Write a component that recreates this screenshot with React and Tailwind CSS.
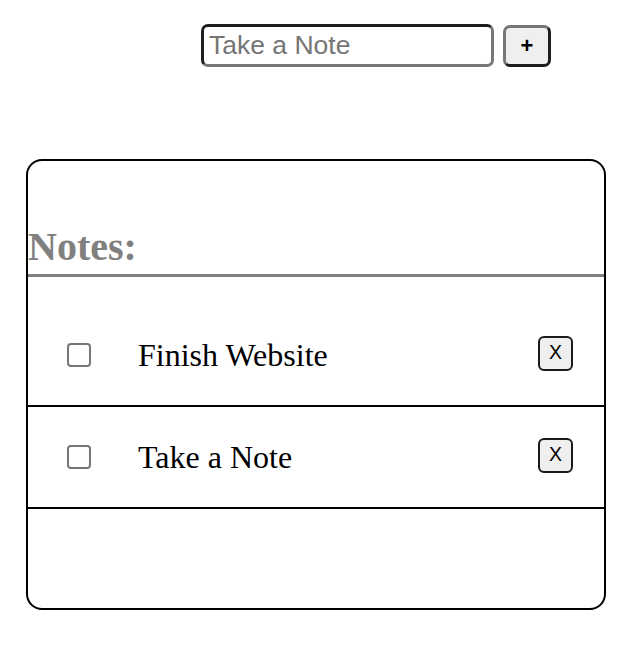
import React, { useState } from 'react';

const NoteRow = ({ text }) => (
    <li className="flex items-center h-[102px] border-b-2 border-black">
        <input
            type="checkbox"
            className="appearance-none ml-[39px] w-6 h-6 border-2 border-[#767676] rounded-[4px] bg-white"
        />
        <span className="ml-[47px] text-[32px] text-black font-['Liberation_Serif',serif]">{text}</span>
        <button
            type="button"
            className="ml-auto mr-[31px] mb-[4px] w-[35px] h-[35px] border-2 border-[#1a1a1a] rounded-[6px] bg-[#efefef] text-[19.5px] leading-none font-['Liberation_Sans',Arial,sans-serif] text-black"
        >
            X
        </button>
    </li>
);

const App = () => {
    const [notes] = useState(['Finish Website', 'Take a Note']); // sample data

    return (
        <div className="w-[642px] h-[662px] bg-white">
            {/* input bar */}
            <div className="flex items-center gap-[9px] pl-[201px] pt-[24px]">
                <input
                    type="text"
                    placeholder="Take a Note"
                    className="w-[293px] h-[43px] px-[5px] border-[3px] border-t-[#1e1e1e] border-l-[#1e1e1e] border-r-[#767676] border-b-[#767676] rounded-[7px] text-[26.5px] font-['Liberation_Sans',Arial,sans-serif] placeholder:text-[#757575] outline-none"
                />
                <button
                    type="button"
                    className="w-[48px] h-[42px] border-[3px] border-t-[#767676] border-l-[#767676] border-r-[#1e1e1e] border-b-[#1e1e1e] rounded-[7px] bg-[#efefef] text-[22px] font-bold leading-none font-['Liberation_Sans',Arial,sans-serif] text-black"
                >
                    +
                </button>
            </div>

            {/* notes card */}
            <div className="mt-[92px] ml-[26px] w-[580px] h-[451px] border-2 border-black rounded-[16px]">
                <h1 className="mt-[66px] pb-[7px] leading-[40px] text-[40px] font-bold text-[#808080] border-b-[3px] border-[#808080] font-['Liberation_Serif',serif]">
                    Notes:
                </h1>
                <ul className="mt-[28px]">
                    {notes.map((n) => (
                        <NoteRow key={n} text={n} />
                    ))}
                </ul>
            </div>
        </div>
    );
};

export default App;
